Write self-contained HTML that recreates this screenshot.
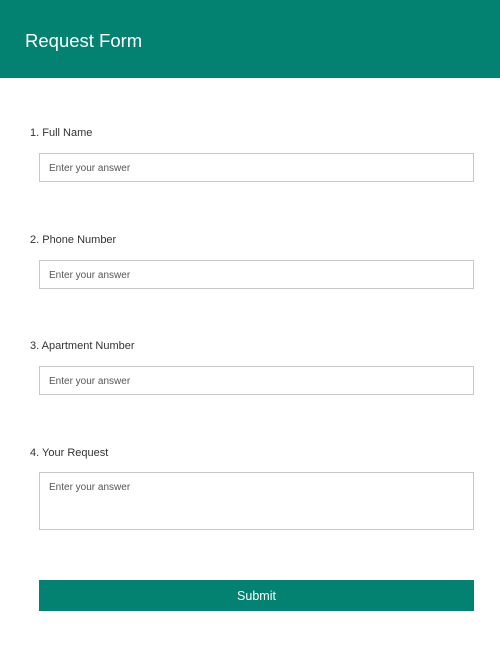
<!DOCTYPE html><html><head><style>
body{margin:0;width:500px;height:645px;background:#fff;font-family:"Liberation Sans",sans-serif;position:relative;overflow:hidden}
.h{position:absolute;left:0;top:0;width:500px;height:78px;background:#038272}
.h span{position:absolute;left:25px;top:30px;color:#fff;font-size:18.5px;font-weight:300}
.l{position:absolute;left:30px;font-size:11px;color:#333}
.i{position:absolute;left:39px;width:433px;border:1px solid #c8c8c8;font-size:10px;color:#555;box-sizing:content-box}
.i span{position:absolute;left:9px;top:9px}
.b{position:absolute;left:39px;top:580px;width:435px;height:31px;background:#038272;color:#fff;font-size:12.5px;text-align:center;line-height:33px}
</style></head><body>
<div class="h"><span>Request Form</span></div>
<div class="l" style="top:127px">1. Full Name</div>
<div class="i" style="top:153px;height:27px"><span>Enter your answer</span></div>
<div class="l" style="top:234px">2. Phone Number</div>
<div class="i" style="top:260px;height:27px"><span>Enter your answer</span></div>
<div class="l" style="top:340px">3. Apartment Number</div>
<div class="i" style="top:366px;height:27px"><span>Enter your answer</span></div>
<div class="l" style="top:447px">4. Your Request</div>
<div class="i" style="top:472px;height:56px"><span>Enter your answer</span></div>
<div class="b">Submit</div>
</body></html>
